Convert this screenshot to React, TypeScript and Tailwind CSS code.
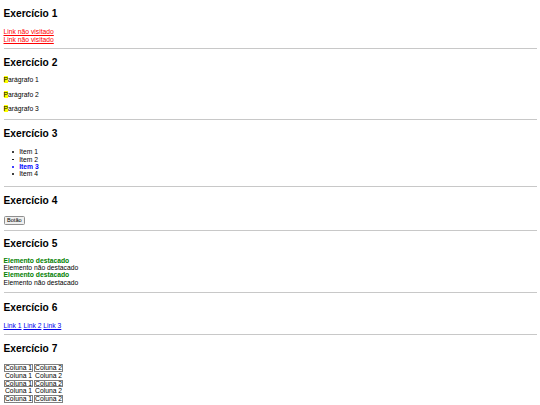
export default function App() {
  const rows = [1, 2, 3, 4, 5];

  return (
    <div className="flex flex-col px-[3.5px] bg-white text-black font-['Liberation_Sans',Arial,sans-serif] text-[6.75px] leading-[7.4px] min-h-screen overflow-hidden">
      {/* Exercício 1 */}
      <h2 className="mt-[8.3px] text-[10.2px] leading-[11px] font-bold">Exercício 1</h2>
      <div className="mt-[8.9px] flex flex-col items-start">
        <a href="#" className="text-[#ff0000] underline">Link não visitado</a>
        <a href="#" className="text-[#ff0000] underline">Link não visitado</a>
      </div>
      <hr className="mt-[4.6px] border-t border-[#c8c8c8]" />

      {/* Exercício 2 */}
      <h2 className="mt-[8px] text-[10.2px] leading-[11px] font-bold">Exercício 2</h2>
      <p className="mt-[8.6px]"><span className="bg-[#ffff00]">P</span>arágrafo 1</p>
      <p className="mt-[7.1px]"><span className="bg-[#ffff00]">P</span>arágrafo 2</p>
      <p className="mt-[7.1px]"><span className="bg-[#ffff00]">P</span>arágrafo 3</p>
      <hr className="mt-[6.6px] border-t border-[#c8c8c8]" />

      {/* Exercício 3 */}
      <h2 className="mt-[7.8px] text-[10.2px] leading-[11px] font-bold">Exercício 3</h2>
      <ul className="mt-[9.4px] pl-[8.5px] leading-[7.35px]">
        <li className="flex items-center">
          <span className="w-[1.7px] h-[1.7px] rounded-full bg-current mr-[5.5px]" />
          Item 1
        </li>
        <li className="flex items-center">
          <span className="w-[1.7px] h-[1.7px] rounded-full bg-current mr-[5.5px]" />
          Item 2
        </li>
        <li className="flex items-center text-[#0000ff] font-bold">
          <span className="w-[1.7px] h-[1.7px] rounded-full bg-current mr-[5.5px]" />
          Item 3
        </li>
        <li className="flex items-center">
          <span className="w-[1.7px] h-[1.7px] rounded-full bg-current mr-[5.5px]" />
          Item 4
        </li>
      </ul>
      <hr className="mt-[8.4px] border-t border-[#c8c8c8]" />

      {/* Exercício 4 */}
      <h2 className="mt-[8.2px] text-[10.2px] leading-[11px] font-bold">Exercício 4</h2>
      <div className="mt-[9.3px] flex">
        <button className="h-[9.5px] px-[2.5px] text-[5.6px] leading-[7px] bg-[#efefef] border border-[#8f8f8f] rounded-[1.5px]">
          Botão
        </button>
      </div>
      <hr className="mt-[4.5px] border-t border-[#c8c8c8]" />

      {/* Exercício 5 */}
      <h2 className="mt-[7.4px] text-[10.2px] leading-[11px] font-bold">Exercício 5</h2>
      <div className="mt-[7.6px] flex flex-col">
        <span className="text-[#008000] font-bold">Elemento destacado</span>
        <span>Elemento não destacado</span>
        <span className="text-[#008000] font-bold">Elemento destacado</span>
        <span>Elemento não destacado</span>
      </div>
      <hr className="mt-[6.2px] border-t border-[#c8c8c8]" />

      {/* Exercício 6 */}
      <h2 className="mt-[8.4px] text-[10.2px] leading-[11px] font-bold">Exercício 6</h2>
      <div className="mt-[8.7px] flex gap-[1.9px]">
        <a href="#" className="text-[#0000ee] underline">Link 1</a>
        <a href="#" className="text-[#0000ee] underline">Link 2</a>
        <a href="#" className="text-[#0000ee] underline">Link 3</a>
      </div>
      <hr className="mt-[4.8px] border-t border-[#c8c8c8]" />

      {/* Exercício 7 */}
      <h2 className="mt-[8.5px] text-[10.2px] leading-[11px] font-bold">Exercício 7</h2>
      <table className="mt-[9.8px] self-start border-separate border-spacing-x-[1px] border-spacing-y-0 -ml-[0.5px]">
        <tbody>
          {rows.map((r) => (
            <tr key={r}>
              {[1, 2].map((c) => (
                <td
                  key={c}
                  className={
                    r % 2 === 1
                      ? "h-[7.75px] p-0 leading-[5.75px] border border-[#808080]"
                      : "h-[7.75px] p-0 leading-[5.75px] border border-transparent"
                  }
                >
                  Coluna {c}
                </td>
              ))}
            </tr>
          ))}
        </tbody>
      </table>
    </div>
  );
}
